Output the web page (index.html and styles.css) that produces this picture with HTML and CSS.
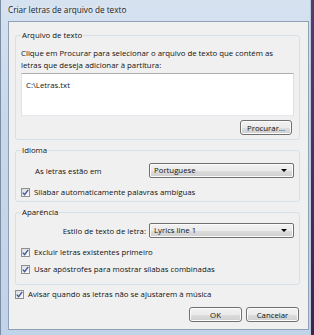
FILE: index.html
```html
<!DOCTYPE html>
<html lang="pt">

<head>
    <meta charset="UTF-8">
    <link rel="stylesheet" href="styles.css">
    <title>Criar letras de arquivo de texto</title>
</head>

<body>
    <div class="window">
        <div class="titlebar">Criar letras de arquivo de texto</div>
        <div class="client">
            <fieldset class="group group-file">
                <legend>Arquivo de texto</legend>
                <p class="hint">Clique em Procurar para selecionar o arquivo de texto que contém as<br>letras que deseja adicionar à partitura:</p>
                <div class="textbox">C:\Letras.txt</div>
                <div class="browse-row">
                    <button class="btn btn-browse">Procurar...</button>
                </div>
            </fieldset>

            <fieldset class="group group-lang">
                <legend>Idioma</legend>
                <div class="field-row">
                    <span class="field-label label-left">As letras estão em</span>
                    <div class="combo">Portuguese<span class="arrow"></span></div>
                </div>
                <label class="check">
                    <span class="box"><svg width="7" height="7" viewBox="0 0 7 7"><path d="M0.8 3.6 L2.6 5.6 L6.2 0.8" fill="none" stroke="#3f57a0" stroke-width="1.4"/></svg></span>
                    Silabar automaticamente palavras ambíguas
                </label>
            </fieldset>

            <fieldset class="group group-look">
                <legend>Aparência</legend>
                <div class="field-row">
                    <span class="field-label label-right">Estilo de texto de letra:</span>
                    <div class="combo">Lyrics line 1<span class="arrow"></span></div>
                </div>
                <label class="check">
                    <span class="box"><svg width="7" height="7" viewBox="0 0 7 7"><path d="M0.8 3.6 L2.6 5.6 L6.2 0.8" fill="none" stroke="#3f57a0" stroke-width="1.4"/></svg></span>
                    Excluir letras existentes primeiro
                </label>
                <label class="check check-last">
                    <span class="box"><svg width="7" height="7" viewBox="0 0 7 7"><path d="M0.8 3.6 L2.6 5.6 L6.2 0.8" fill="none" stroke="#3f57a0" stroke-width="1.4"/></svg></span>
                    Usar apóstrofes para mostrar sílabas combinadas
                </label>
            </fieldset>

            <label class="check check-warn">
                <span class="box"><svg width="7" height="7" viewBox="0 0 7 7"><path d="M0.8 3.6 L2.6 5.6 L6.2 0.8" fill="none" stroke="#3f57a0" stroke-width="1.4"/></svg></span>
                Avisar quando as letras não se ajustarem à música
            </label>

            <div class="buttons">
                <button class="btn">OK</button>
                <button class="btn">Cancelar</button>
            </div>
        </div>
    </div>
</body>

</html>
```

FILE: styles.css
```css
body {
    margin: 0;
    width: 314px;
    height: 335px;
    overflow: hidden;
    background: linear-gradient(to bottom, #5b3a6e, #3c2350);
    font-family: "Open Sans", "Liberation Sans", sans-serif;
    font-size: 7.8px;
    color: #111;
}

.window {
    width: 311px;
    height: 335px;
    box-sizing: border-box;
    display: flex;
    flex-direction: column;
    padding: 0 1px 5px 7px;
    border-left: 1px solid #7d8ea4;
    border-right: 1px solid #b9c9dc;
    background: linear-gradient(to bottom, #d6e2f0 0%, #c8d8ea 35%, #c1d3e8 100%);
}

.titlebar {
    height: 21px;
    line-height: 20px;
    font-size: 8.2px;
    color: #1b1b1b;
    text-shadow: 0 0 5px rgba(255, 255, 255, 0.9);
}

.client {
    flex: 1;
    box-sizing: border-box;
    background: #f0f0f0;
    border: 1px solid #8fa0b6;
    padding: 0 8px 0 6px;
    display: flex;
    flex-direction: column;
}

/* group boxes */
.group {
    margin: 7px 0 0;
    padding: 6px 5px 4px;
    border: 1px solid #d5dfe5;
    border-radius: 3px;
    min-width: 0;
}

.group legend {
    padding: 0 1px;
    margin-left: 0;
    line-height: 12px;
}

.group-lang,
.group-look {
    margin-top: 4px;
}

.group-lang {
    padding-top: 7px;
    padding-bottom: 3px;
}

.group-look {
    padding-top: 5px;
    padding-bottom: 9px;
}

.hint {
    margin: 0;
    line-height: 12px;
}

.textbox {
    margin-top: 2px;
    height: 43px;
    box-sizing: border-box;
    padding: 5px 4px;
    background: #fff;
    border: 1px solid #abadb3;
    border-color: #abadb3 #dbdfe6 #e3e9ef #e2e3ea;
    line-height: 12px;
}

.browse-row {
    display: flex;
    justify-content: flex-end;
    padding-right: 2px;
    margin-top: 4px;
}

/* buttons */
.btn {
    font: inherit;
    color: #111;
    height: 15px;
    padding: 0;
    border: 1px solid #707070;
    border-radius: 3px;
    background: linear-gradient(to bottom, #f2f2f2 0%, #ebebeb 50%, #dddddd 51%, #cfcfcf 100%);
    box-shadow: inset 0 0 0 1px #fcfcfc;
    line-height: 12px;
}

.btn-browse {
    width: 52px;
}

.buttons {
    display: flex;
    justify-content: flex-end;
    gap: 4px;
    margin-top: 7px;
    padding-right: 1px;
}

.buttons .btn {
    width: 53px;
}

/* combo rows */
.field-row {
    display: grid;
    grid-template-columns: 125px 145px;
    column-gap: 3px;
    align-items: center;
}

.label-left {
    padding-left: 14px;
}

.label-right {
    text-align: right;
}

.combo {
    height: 15px;
    box-sizing: border-box;
    border: 1px solid #707070;
    border-radius: 2px;
    background: linear-gradient(to bottom, #f2f2f2 0%, #ebebeb 50%, #dddddd 51%, #cfcfcf 100%);
    box-shadow: inset 0 0 0 1px #fbfbfb;
    padding: 0 4px;
    line-height: 13px;
    display: flex;
    justify-content: space-between;
    align-items: center;
}

.combo .arrow {
    width: 0;
    height: 0;
    border-left: 3px solid transparent;
    border-right: 3px solid transparent;
    border-top: 3px solid #000;
    margin-right: 2px;
}

/* checkboxes */
.check {
    display: flex;
    align-items: center;
    gap: 4px;
    line-height: 12px;
    margin-top: 8px;
}

.check-last {
    margin-top: 5px;
}

.check-warn {
    margin-top: 3px;
}

.box {
    width: 9px;
    height: 9px;
    box-sizing: border-box;
    border: 1px solid #8f8f8f;
    background: linear-gradient(135deg, #dcdcdc, #fbfbfb);
    display: flex;
    align-items: center;
    justify-content: center;
}
```
